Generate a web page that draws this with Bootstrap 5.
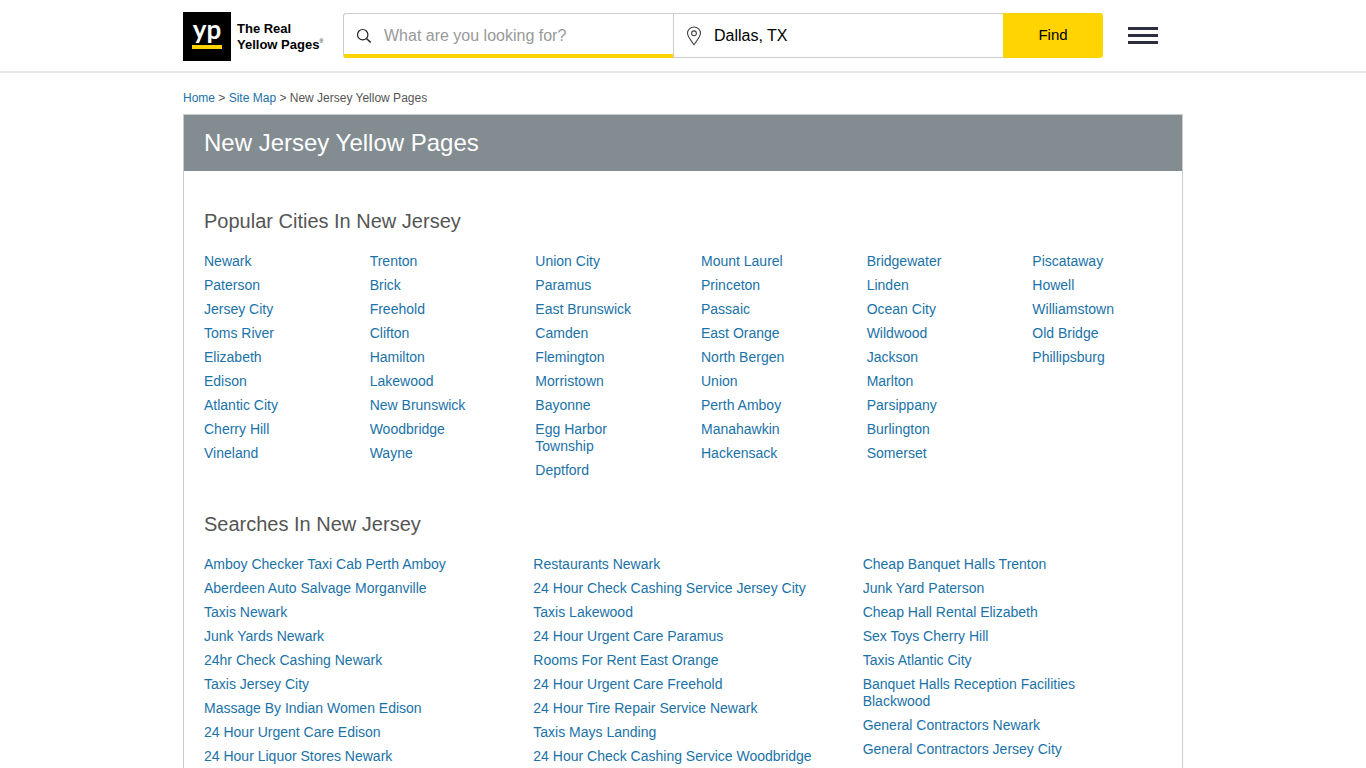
<!DOCTYPE html>
<html lang="en">
<head>
<meta charset="utf-8">
<meta name="viewport" content="width=device-width, initial-scale=1">
<title>New Jersey Yellow Pages</title>
<link href="https://cdn.jsdelivr.net/npm/bootstrap@5.3.0/dist/css/bootstrap.min.css" rel="stylesheet">
<style>
  body { font-family: "Liberation Sans", Arial, sans-serif; font-size: 14px; line-height: 17px; color: #555; }
  a { color: #1a72a8; text-decoration: none; }
  a:hover { text-decoration: underline; }
  .page-width { max-width: 1000px; }
  .site-header { border-bottom: 2px solid #e6e6e6; padding: 12px 0 10px; }
  .brand { width: 160px; gap: 6px; color: #000; }
  .brand:hover { text-decoration: none; }
  .brand-name { font-weight: 700; font-size: 13px; line-height: 16px; white-space: nowrap; }
  .brand-name sup { font-size: 5px; line-height: 0; top: -6px; font-weight: 400; }
  .search-bar { max-width: 760px; height: 45px; font-size: 16px; margin-bottom: 2px; }
  .search-field { border: 1px solid #ccc; border-right: 0; flex: 1 1 0; min-width: 0; gap: 12px; padding-left: 12px; }
  .search-field input { color: #000; min-width: 0; }
  .search-field input:focus { outline: 0; }
  .search-field input::placeholder { color: #999; opacity: 1; }
  .what-field { border-bottom: 4px solid #ffd400; border-radius: 3px 0 0 3px; padding-top: 3px; }
  .find-btn { width: 100px; background: #ffd400; color: #000; font-size: 15px; border: 0; border-radius: 0 3px 3px 0; }
  .find-btn:hover { background: #f2c900; }
  .menu-btn { margin: 0 0 2px 25px; }
  .crumbs { font-size: 12px; line-height: 16px; padding: 17px 0 8px; }
  .panel { border: 1px solid #ccc; border-bottom: 0; }
  .panel-title { background: #838c91; color: #fff; font-size: 24px; line-height: 28px; padding: 14px 20px; }
  .panel-body { padding: 38px 20px 3px; }
  .panel-body h2 { font-size: 20px; line-height: 24px; font-weight: 400; margin-bottom: 20px; }
  .panel-body section + section { margin-top: 33px; }
  .link-cols { display: grid; }
  .cities { grid-template-columns: repeat(6, 1fr); column-gap: 36px; }
  .searches { grid-template-columns: repeat(3, 1fr); column-gap: 30px; }
  .searches li { padding-right: 18px; }
  .link-cols li + li { margin-top: 7px; }
</style>
</head>
<body>
<header class="site-header">
  <div class="page-width container p-0 d-flex align-items-center">
    <a href="#" class="brand d-flex flex-shrink-0 align-items-center" aria-label="The Real Yellow Pages">
      <svg width="48" height="49" viewBox="0 0 48 49" aria-hidden="true">
        <rect width="48" height="49"/>
        <text x="24" y="27" text-anchor="middle" font-family="Lato, sans-serif" font-weight="700" font-size="26" fill="#fff">yp</text>
        <rect x="9" y="33" width="30" height="4" fill="#ffd400"/>
      </svg>
      <span class="brand-name">The Real<br>Yellow Pages<sup>®</sup></span>
    </a>
    <form class="search-bar d-flex flex-grow-1" role="search">
      <label class="search-field what-field d-flex align-items-center">
        <svg class="flex-shrink-0" width="16" height="16" viewBox="0 0 16 16" fill="none" stroke="#222" stroke-width="1.2" aria-hidden="true"><circle cx="6.700" cy="6.700" r="5.200"/><path d="M10.500 10.500l4.200 4" stroke-width="1.500"/></svg>
        <input class="border-0 p-0 w-100 bg-transparent" type="text" placeholder="What are you looking for?" aria-label="What are you looking for?">
      </label>
      <label class="search-field where-field d-flex align-items-center">
        <svg class="flex-shrink-0" width="16" height="20" viewBox="0 0 16 20" fill="none" stroke="#444" stroke-width="1.1" aria-hidden="true"><path d="M8 18.800C5.600 15 1.500 10.500 1.500 7.200a6.500 6.200 0 0 1 13 0C14.500 10.500 10.400 15 8 18.800z"/><circle cx="8" cy="7.300" r="2.400"/></svg>
        <input class="border-0 p-0 w-100 bg-transparent" type="text" value="Dallas, TX" aria-label="Where">
      </label>
      <button class="btn find-btn p-0" type="submit">Find</button>
    </form>
    <button class="menu-btn btn border-0 p-0" type="button" aria-label="Menu">
      <svg class="d-block" width="30" height="17" viewBox="0 0 30 17" fill="#2a2e3d" aria-hidden="true"><path d="M0 0h30v3H0zM0 7h30v3H0zM0 14h30v3H0z"/></svg>
    </button>
  </div>
</header>
<main class="page-width container p-0">
  <nav class="crumbs" aria-label="Breadcrumb"><a href="#">Home</a> &gt; <a href="#">Site Map</a> &gt; New Jersey Yellow Pages</nav>
  <div class="panel">
    <h1 class="panel-title m-0 fw-normal">New Jersey Yellow Pages</h1>
    <div class="panel-body">
      <section>
        <h2>Popular Cities In New Jersey</h2>
        <div class="link-cols cities">
          <ul class="list-unstyled m-0"><li><a href="#">Newark</a></li><li><a href="#">Paterson</a></li><li><a href="#">Jersey City</a></li><li><a href="#">Toms River</a></li><li><a href="#">Elizabeth</a></li><li><a href="#">Edison</a></li><li><a href="#">Atlantic City</a></li><li><a href="#">Cherry Hill</a></li><li><a href="#">Vineland</a></li></ul>
          <ul class="list-unstyled m-0"><li><a href="#">Trenton</a></li><li><a href="#">Brick</a></li><li><a href="#">Freehold</a></li><li><a href="#">Clifton</a></li><li><a href="#">Hamilton</a></li><li><a href="#">Lakewood</a></li><li><a href="#">New Brunswick</a></li><li><a href="#">Woodbridge</a></li><li><a href="#">Wayne</a></li></ul>
          <ul class="list-unstyled m-0"><li><a href="#">Union City</a></li><li><a href="#">Paramus</a></li><li><a href="#">East Brunswick</a></li><li><a href="#">Camden</a></li><li><a href="#">Flemington</a></li><li><a href="#">Morristown</a></li><li><a href="#">Bayonne</a></li><li><a href="#">Egg Harbor Township</a></li><li><a href="#">Deptford</a></li></ul>
          <ul class="list-unstyled m-0"><li><a href="#">Mount Laurel</a></li><li><a href="#">Princeton</a></li><li><a href="#">Passaic</a></li><li><a href="#">East Orange</a></li><li><a href="#">North Bergen</a></li><li><a href="#">Union</a></li><li><a href="#">Perth Amboy</a></li><li><a href="#">Manahawkin</a></li><li><a href="#">Hackensack</a></li></ul>
          <ul class="list-unstyled m-0"><li><a href="#">Bridgewater</a></li><li><a href="#">Linden</a></li><li><a href="#">Ocean City</a></li><li><a href="#">Wildwood</a></li><li><a href="#">Jackson</a></li><li><a href="#">Marlton</a></li><li><a href="#">Parsippany</a></li><li><a href="#">Burlington</a></li><li><a href="#">Somerset</a></li></ul>
          <ul class="list-unstyled m-0"><li><a href="#">Piscataway</a></li><li><a href="#">Howell</a></li><li><a href="#">Williamstown</a></li><li><a href="#">Old Bridge</a></li><li><a href="#">Phillipsburg</a></li></ul>
        </div>
      </section>
      <section>
        <h2>Searches In New Jersey</h2>
        <div class="link-cols searches">
          <ul class="list-unstyled m-0"><li><a href="#">Amboy Checker Taxi Cab Perth Amboy</a></li><li><a href="#">Aberdeen Auto Salvage Morganville</a></li><li><a href="#">Taxis Newark</a></li><li><a href="#">Junk Yards Newark</a></li><li><a href="#">24hr Check Cashing Newark</a></li><li><a href="#">Taxis Jersey City</a></li><li><a href="#">Massage By Indian Women Edison</a></li><li><a href="#">24 Hour Urgent Care Edison</a></li><li><a href="#">24 Hour Liquor Stores Newark</a></li></ul>
          <ul class="list-unstyled m-0"><li><a href="#">Restaurants Newark</a></li><li><a href="#">24 Hour Check Cashing Service Jersey City</a></li><li><a href="#">Taxis Lakewood</a></li><li><a href="#">24 Hour Urgent Care Paramus</a></li><li><a href="#">Rooms For Rent East Orange</a></li><li><a href="#">24 Hour Urgent Care Freehold</a></li><li><a href="#">24 Hour Tire Repair Service Newark</a></li><li><a href="#">Taxis Mays Landing</a></li><li><a href="#">24 Hour Check Cashing Service Woodbridge</a></li></ul>
          <ul class="list-unstyled m-0"><li><a href="#">Cheap Banquet Halls Trenton</a></li><li><a href="#">Junk Yard Paterson</a></li><li><a href="#">Cheap Hall Rental Elizabeth</a></li><li><a href="#">Sex Toys Cherry Hill</a></li><li><a href="#">Taxis Atlantic City</a></li><li><a href="#">Banquet Halls Reception Facilities Blackwood</a></li><li><a href="#">General Contractors Newark</a></li><li><a href="#">General Contractors Jersey City</a></li></ul>
        </div>
      </section>
    </div>
  </div>
</main>
<script src="https://cdn.jsdelivr.net/npm/bootstrap@5.3.0/dist/js/bootstrap.bundle.min.js"></script>
</body>
</html>
